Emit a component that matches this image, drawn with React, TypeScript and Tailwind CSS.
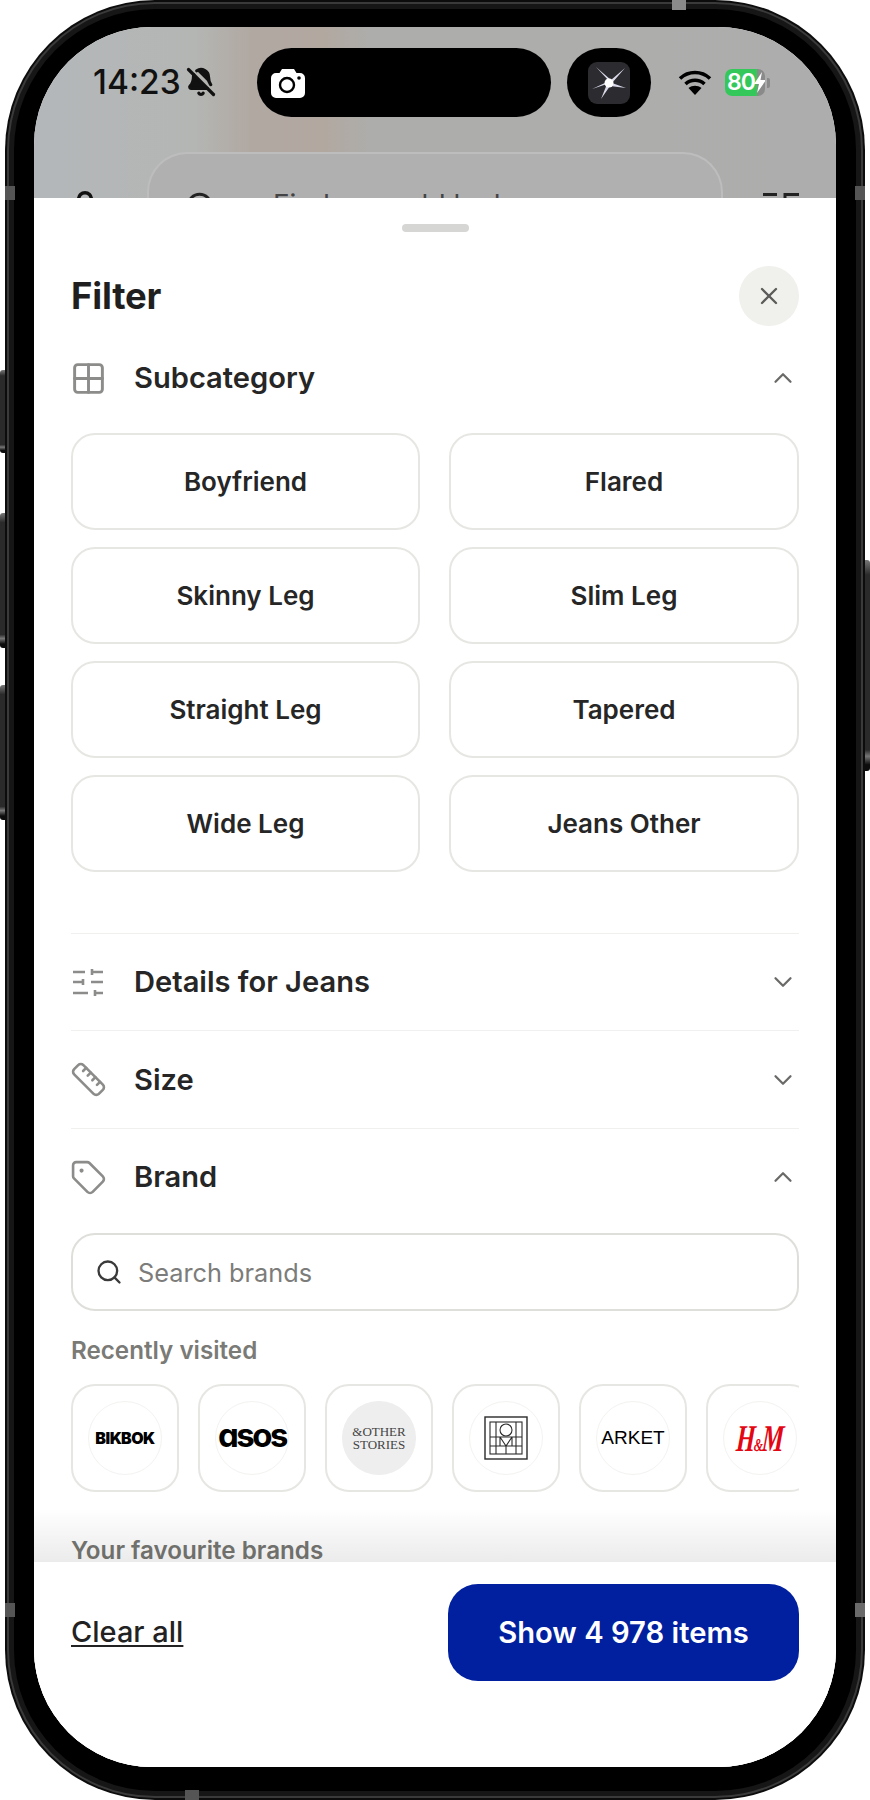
import React from "react";
import {
  BellOff,
  ChevronDown,
  ChevronUp,
  Grid2x2,
  Ruler,
  Search,
  Tag,
  User,
  X,
} from "lucide-react";

const subcategories = [
  "Boyfriend",
  "Flared",
  "Skinny Leg",
  "Slim Leg",
  "Straight Leg",
  "Tapered",
  "Wide Leg",
  "Jeans Other",
];

const DetailsIcon = () => (
  <svg width="33" height="32" viewBox="0 0 33 32" fill="none" stroke="#8c8c8a" strokeWidth="2.6">
    <path d="M2 6h12M21 3v6M21 6h11M2 16h10M12 13v6M20 16h12M2 27h15M24 24v6M24 27h8" />
  </svg>
);

const CameraIcon = () => (
  <svg width="34" height="30" viewBox="0 0 34 30">
    <path
      fill="#fff"
      d="M11 1h12l2.500 4H29a5 5 0 0 1 5 5v15a5 5 0 0 1-5 5H5a5 5 0 0 1-5-5V10a5 5 0 0 1 5-5h3.500z"
    />
    <circle cx="16" cy="17" r="7" fill="none" stroke="#000" strokeWidth="2.400" />
    <circle cx="28" cy="10" r="1.800" fill="#000" />
  </svg>
);

const WifiIcon = () => (
  <svg width="34" height="26" viewBox="0 0 34 26" fill="none" stroke="#000" strokeWidth="3.600">
    <path d="M2 8.500c8.500-8 21.500-8 30 0" />
    <path d="M7.500 14c5.500-5 13.500-5 19 0" />
    <path fill="#000" stroke="none" d="M17 25l-6.500-7c3.800-3 9.200-3 13 0z" />
  </svg>
);

const BoltIcon = () => (
  <svg width="12" height="21" viewBox="0 0 12 21" className="-ml-[1px] shrink-0">
    <path fill="#fff" d="M8 0L0 12h5l-2 9 9-13H6.500z" />
  </svg>
);

const SparkThumb = () => (
  <svg width="42" height="42" viewBox="0 0 42 42">
    <rect width="42" height="42" rx="9" fill="#2b2b30" />
    <path fill="#d8d8e8" d="M21 19L8 5l15 13L37 6 24 21l14 5-16-2-9 13 6-15-15 5 15-7z" />
    <circle cx="21" cy="21" r="4.500" fill="#fff" />
  </svg>
);

const FilterTicks = () => (
  <svg width="36" height="12" viewBox="0 0 36 12" fill="none" stroke="#222" strokeWidth="3">
    <path d="M0 1.500h14M22 0v12M22 1.500h14" />
  </svg>
);

const ToiletLogo = () => (
  <svg width="44" height="44" viewBox="0 0 44 44" fill="none" stroke="#2a2a2a" strokeWidth="1.100">
    <rect x="1" y="1" width="42" height="42" strokeWidth="1.400" />
    <rect x="6" y="6" width="32" height="32" />
    <circle cx="22" cy="14" r="6" />
    <path d="M6 21h32M6 30h32M12 6v15M32 6v15M12 21v17M32 21v17M16 21l6 9 6-9M16 21v9M28 21v9M22 30v8" />
  </svg>
);

const Chevron = ({ open }: { open: boolean }) => (
  <div className="ml-auto mr-[1px] text-[#6a6a68]">
    {open ? <ChevronUp size={30} strokeWidth={1.8} /> : <ChevronDown size={30} strokeWidth={1.8} />}
  </div>
);

const SectionRow = ({
  icon,
  title,
  open,
  className,
}: {
  icon: React.ReactNode;
  title: string;
  open: boolean;
  className: string;
}) => (
  <div className={`flex items-center ${className}`}>
    <div className="w-[63px] text-[#8c8c8a]">{icon}</div>
    <span className="text-[29.100px] font-semibold text-[#262626]">{title}</span>
    <Chevron open={open} />
  </div>
);

const BrandTile = ({ children, grey }: { children: React.ReactNode; grey?: boolean }) => (
  <div className="flex h-[108px] w-[108px] shrink-0 items-center justify-center rounded-[24px] border-2 border-[#e6e6e3]">
    <div
      className={`flex h-[74px] w-[74px] items-center justify-center overflow-hidden rounded-full border ${
        grey ? "border-[#eeeeee] bg-[#eeeeee]" : "border-[#f3f3f1] bg-white"
      }`}
    >
      {children}
    </div>
  </div>
);

const sideButton = "bg-[linear-gradient(180deg,#777777_0%,#2a2a2a_7%,#2a2a2a_90%,#777777_93%,#0c0c0c_97%)]";

const App = () => {
  return (
    <div className="relative h-[1800px] w-[870px] bg-white font-['Inter',sans-serif]">
      {/* side buttons */}
      <div className={`absolute left-0 top-[370px] h-[83px] w-[7px] rounded-l-[3px] ${sideButton}`} />
      <div className={`absolute left-0 top-[513px] h-[135px] w-[7px] rounded-l-[3px] ${sideButton}`} />
      <div className={`absolute left-0 top-[685px] h-[135px] w-[7px] rounded-l-[3px] ${sideButton}`} />
      <div className={`absolute right-0 top-[560px] h-[211px] w-[7px] rounded-r-[3px] ${sideButton}`} />

      <div className="absolute left-[5px] top-0 h-[1800px] w-[860px] rounded-[150px] bg-[#0c0c0c] p-[2px]">
        <div className="h-full rounded-[148px] bg-[#3a3a3a] p-[2px]">
          <div className="h-full rounded-[146px] bg-[#161616] p-[5px]">
            <div className="h-full rounded-[141px] bg-black pb-[24px] pl-[20px] pr-[20px] pt-[18px]">
              {/* screen */}
              <div className="flex h-full flex-col overflow-hidden rounded-[118px] bg-white">
                {/* dimmed app behind the sheet */}
                <div className="h-[171px] shrink-0 overflow-hidden bg-[linear-gradient(90deg,#b4b7ba_0%,#b4b6b4_20%,#b1a8a2_27%,#b2a8a0_36%,#adadab_42%,#adadad_100%)]">
                  <div className="flex h-[90px] items-start pt-[21px]">
                    <div className="flex w-[223px] items-center pl-[59px] pt-[15px]">
                      <span className="text-[33.500px] font-medium leading-[38px] text-[#111111]">14:23</span>
                      <BellOff size={30} strokeWidth={2.6} className="ml-[5px] text-[#111111]" fill="#111111" />
                    </div>
                    <div className="flex h-[69px] w-[294px] items-center rounded-[35px] bg-black pl-[14px]">
                      <CameraIcon />
                    </div>
                    <div className="ml-[16px] flex h-[69px] w-[84px] items-center justify-center rounded-[35px] bg-black">
                      <SparkThumb />
                    </div>
                    <div className="ml-[27px] flex h-[69px] items-center">
                      <WifiIcon />
                      <div className="ml-[13px] flex h-[27px] w-[40px] items-center overflow-hidden rounded-[7px] bg-[linear-gradient(90deg,#34c85a_0%,#34c85a_80%,#8a8a8a_80%)] pl-[2px]">
                        <span className="text-[23px] font-semibold leading-none tracking-[-1px] text-white">80</span>
                        <BoltIcon />
                      </div>
                      <div className="ml-[2px] h-[10px] w-[3px] rounded-r-[2px] bg-[#8a8a8a]" />
                    </div>
                  </div>
                  <div className="mt-[35px] flex items-start pl-[32px]">
                    <div className="w-[81px] pt-[36px] text-[#111111]">
                      <User size={38} strokeWidth={2.2} />
                    </div>
                    <div className="flex h-[80px] w-[576px] items-start rounded-t-[40px] border-2 border-b-0 border-[#bdbdbd] bg-[#b0b0b0] pl-[35px] pt-[36px]">
                      <Search size={34} strokeWidth={2} className="text-[#222222]" />
                      <span className="-mt-[2px] ml-[55px] text-[28px] leading-[34px] text-[#444444]">Find your old look</span>
                    </div>
                    <div className="ml-[40px] mt-[41px]">
                      <FilterTicks />
                    </div>
                  </div>
                </div>

                {/* filter sheet */}
                <div className="flex min-h-0 flex-1 flex-col rounded-t-[36px] bg-white">
                  <div className="mx-auto mt-[26px] h-[8px] w-[67px] shrink-0 rounded-full bg-[#d6d6d4]" />
                  <div className="relative min-h-0 flex-1 overflow-hidden px-[37px]">
                    <div className="mt-[34px] flex h-[60px] items-center justify-between">
                      <h1 className="text-[36.500px] font-bold tracking-[-0.2px] text-[#1f1f1f]">Filter</h1>
                      <div className="flex h-[60px] w-[60px] items-center justify-center rounded-full bg-[#f0f0ec] text-[#5c5c5a]">
                        <X size={28} strokeWidth={2} />
                      </div>
                    </div>

                    <SectionRow
                      icon={<Grid2x2 size={37} strokeWidth={1.9} className="-ml-[1px]" />}
                      title="Subcategory"
                      open
                      className="h-[104px]"
                    />
                    <div className="mt-[3px] grid grid-cols-[349px_350px] gap-x-[29px] gap-y-[17px]">
                      {subcategories.map((name) => (
                        <div
                          key={name}
                          className="flex h-[97px] items-center justify-center rounded-[24px] border-2 border-[#e6e6e3] text-[26px] font-semibold text-[#262626]"
                        >
                          {name}
                        </div>
                      ))}
                    </div>

                    <div className="mt-[61px] border-t border-[#f0f0ee]">
                      <SectionRow icon={<DetailsIcon />} title="Details for Jeans" open={false} className="h-[96px]" />
                    </div>
                    <div className="border-t border-[#f0f0ee]">
                      <SectionRow
                        icon={<Ruler size={37} strokeWidth={1.7} className="-ml-[1px]" />}
                        title="Size"
                        open={false}
                        className="h-[97px]"
                      />
                    </div>
                    <div className="border-t border-[#f0f0ee]">
                      <SectionRow
                        icon={<Tag size={37} strokeWidth={1.7} className="-ml-[1px]" />}
                        title="Brand"
                        open
                        className="h-[96px]"
                      />
                    </div>

                    <div className="mt-[8px] flex h-[78px] items-center rounded-[24px] border-2 border-[#dededa] pl-[22px]">
                      <Search size={28} strokeWidth={2} className="text-[#3a3a3a]" />
                      <span className="ml-[15px] pt-[2px] text-[25.300px] text-[#7c7c7a]">Search brands</span>
                    </div>

                    <p className="mt-[25px] text-[24.200px] font-semibold leading-[30px] text-[#7a7a76]">Recently visited</p>

                    <div className="mt-[18px] flex w-[728px] gap-[19px] overflow-hidden">
                      <BrandTile>
                        <span className="text-[16px] font-black tracking-[-0.5px] text-black [word-spacing:-3px]">BIK BOK</span>
                      </BrandTile>
                      <BrandTile>
                        <span className="-mt-[5px] text-[33px] font-bold leading-none tracking-[-2.500px] text-black [font-feature-settings:'cv11']">
                          asos
                        </span>
                      </BrandTile>
                      <BrandTile grey>
                        <span className="text-center font-['Liberation_Serif',serif] text-[13px] leading-[13px] text-[#444444]">
                          &amp;OTHER
                          <br />
                          STORIES
                        </span>
                      </BrandTile>
                      <BrandTile>
                        <ToiletLogo />
                      </BrandTile>
                      <BrandTile>
                        <span className="font-['Liberation_Sans',sans-serif] text-[19px] text-black">ARKET</span>
                      </BrandTile>
                      <BrandTile>
                        <span className="-skew-x-6 scale-x-[0.65] whitespace-nowrap font-['Liberation_Serif',serif] text-[38px] font-bold italic leading-none tracking-[-2px] text-[#e30613]">
                          H<span className="text-[18px]">&amp;</span>M
                        </span>
                      </BrandTile>
                    </div>

                    <p className="mt-[44px] text-[24.200px] font-semibold leading-[30px] text-[#767672]">Your favourite brands</p>

                    <div className="absolute bottom-0 left-0 right-0 h-[54px] bg-[linear-gradient(180deg,rgba(0,0,0,0),rgba(0,0,0,0.08))]" />
                  </div>

                  {/* footer */}
                  <div className="flex h-[205px] shrink-0 items-start justify-between bg-white px-[37px] pt-[22px]">
                    <span className="mt-[28px] text-[29px] font-medium leading-[40px] text-[#222222] underline underline-offset-[3px]">
                      Clear all
                    </span>
                    <div className="flex h-[97px] w-[351px] items-center justify-center rounded-[30px] bg-[#00209f] text-[29.200px] font-semibold text-white">
                      Show 4 978 items
                    </div>
                  </div>
                </div>
              </div>
            </div>
          </div>
        </div>
      </div>

      {/* antenna bands */}
      <div className="absolute left-[5px] top-[186px] h-[14px] w-[10px] bg-[#555555]" />
      <div className="absolute right-[5px] top-[186px] h-[14px] w-[10px] bg-[#555555]" />
      <div className="absolute left-[5px] top-[1603px] h-[14px] w-[10px] bg-[#555555]" />
      <div className="absolute right-[5px] top-[1603px] h-[14px] w-[10px] bg-[#6a6a6a]" />
      <div className="absolute left-[672px] top-0 h-[10px] w-[14px] bg-[#8a8a8a]" />
      <div className="absolute left-[185px] top-[1790px] h-[10px] w-[14px] bg-[#555555]" />
    </div>
  );
};

export default App;
